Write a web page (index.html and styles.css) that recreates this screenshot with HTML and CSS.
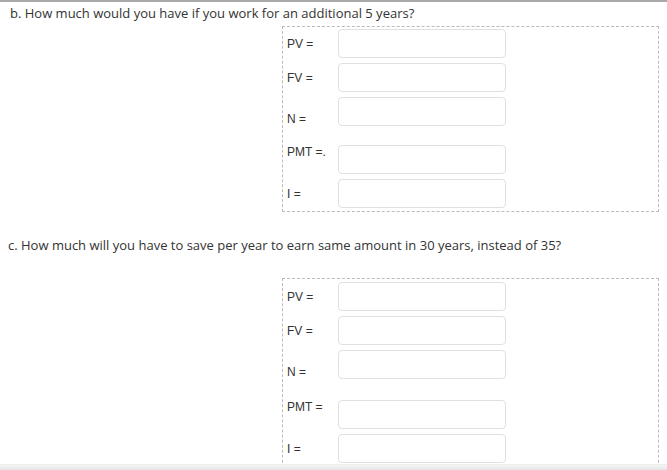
FILE: index.html
```html
<!DOCTYPE html>
<html>
<head>
<meta charset="utf-8">
<link rel="stylesheet" href="styles.css">
</head>
<body>
<div class="page">
  <p class="q q-b">b. How much would you have if you work for an additional 5 years?</p>
  <div class="box box-b">
    <div class="row"><span class="lbl">PV =</span><span class="inp"></span></div>
    <div class="row"><span class="lbl">FV =</span><span class="inp"></span></div>
    <div class="row"><span class="lbl low">N =</span><span class="inp"></span></div>
    <div class="row gap-b"><span class="lbl high">PMT =.</span><span class="inp"></span></div>
    <div class="row"><span class="lbl">I =</span><span class="inp"></span></div>
  </div>
  <p class="q q-c">c. How much will you have to save per year to earn same amount in 30 years, instead of 35?</p>
  <div class="box box-c">
    <div class="row"><span class="lbl">PV =</span><span class="inp"></span></div>
    <div class="row"><span class="lbl">FV =</span><span class="inp"></span></div>
    <div class="row"><span class="lbl low">N =</span><span class="inp"></span></div>
    <div class="row gap-c"><span class="lbl high">PMT =</span><span class="inp"></span></div>
    <div class="row"><span class="lbl">I =</span><span class="inp"></span></div>
  </div>
</div>
<div class="footer-shade"></div>
</body>
</html>
```

FILE: styles.css
```css
html, body {
  margin: 0;
  padding: 0;
  background: #fff;
  overflow: hidden;
}
body {
  height: 470px;
  position: relative;
}
.page {
  border-top: 2px solid #a9a9a9;
  padding-left: 10px;
}
.q {
  margin: 0;
  font-family: "Open Sans", "Liberation Sans", sans-serif;
  font-size: 13px;
  line-height: 18px;
  color: #333;
}
.q-b {
  margin-top: 2px;
  margin-bottom: 4px;
}
.q-c {
  margin-top: 24px;
  margin-left: -2px;
  margin-bottom: 24px;
}
.box {
  margin-left: 272px;
  width: 377px;
  box-sizing: border-box;
  border: 1px dashed #bbb;
  padding: 2px 0 3px 4px;
}
.box-c {
  padding-top: 3px;
  height: 200px;
  border-bottom: none;
}
.row {
  display: flex;
  align-items: center;
  margin-top: 5px;
}
.row:first-child {
  margin-top: 0;
}
.row.gap-b {
  margin-top: 19px;
}
.row.gap-c {
  margin-top: 21px;
}
.lbl {
  width: 51px;
  font-family: "Liberation Sans", Arial, sans-serif;
  font-size: 12px;
  line-height: 14px;
  color: #333;
}
.lbl.low {
  align-self: flex-end;
}
.lbl.high {
  align-self: flex-start;
}
.inp {
  display: block;
  width: 168px;
  height: 29px;
  box-sizing: border-box;
  border: 1px solid #e0e0e0;
  border-radius: 4px;
  background: #fff;
}
.footer-shade {
  position: absolute;
  left: 0;
  right: 0;
  bottom: 0;
  height: 5px;
  background: linear-gradient(#f4f4f4, #e6e6e6);
  border-top: 1px solid #ededed;
}
```
